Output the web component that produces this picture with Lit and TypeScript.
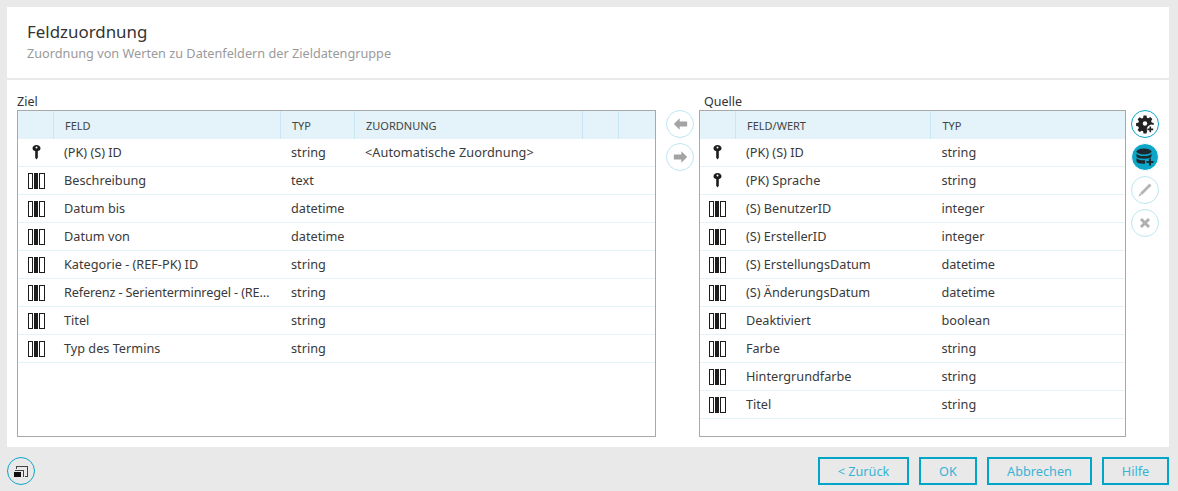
import { LitElement, html, css, svg } from "lit";
import { customElement } from "lit/decorators.js";

const keyIcon = svg`<svg class="ico" width="9" height="15" viewBox="0 0 9 15"><path fill="#1c1c1c" d="M4.500 0C6.700 0 8.500 1.300 8.500 3.200c0 1.300-.9 2.300-2.700 2.900v6.700L4.500 14.500l-1.300-1.700V6.100C1.400 5.500.5 4.500.5 3.200.5 1.300 2.300 0 4.500 0z"/><circle cx="4.500" cy="2.600" r="1" fill="#fff"/></svg>`;
const fieldIcon = svg`<svg class="ico" width="17" height="16" viewBox="0 0 17 16" shape-rendering="crispEdges"><g fill="#1c1c1c"><rect x="0" y="0" width="5" height="1"/><rect x="0" y="15" width="5" height="1"/><rect x="0" y="0" width="1" height="16"/><rect x="4" y="0" width="1" height="16"/><rect x="6" y="0" width="4" height="16"/><rect x="11" y="0" width="6" height="1"/><rect x="11" y="15" width="6" height="1"/><rect x="11" y="0" width="1" height="16"/><rect x="16" y="0" width="1" height="16"/></g></svg>`;

type Row = [string, string, string, string?];
const ziel: Row[] = [
  ["k", "(PK) (S) ID", "string", "<Automatische Zuordnung>"],
  ["f", "Beschreibung", "text"],
  ["f", "Datum bis", "datetime"],
  ["f", "Datum von", "datetime"],
  ["f", "Kategorie - (REF-PK) ID", "string"],
  ["f", "Referenz - Serienterminregel - (RE…", "string"],
  ["f", "Titel", "string"],
  ["f", "Typ des Termins", "string"],
];
const quelle: Row[] = [
  ["k", "(PK) (S) ID", "string"],
  ["k", "(PK) Sprache", "string"],
  ["f", "(S) BenutzerID", "integer"],
  ["f", "(S) ErstellerID", "integer"],
  ["f", "(S) ErstellungsDatum", "datetime"],
  ["f", "(S) ÄnderungsDatum", "datetime"],
  ["f", "Deaktiviert", "boolean"],
  ["f", "Farbe", "string"],
  ["f", "Hintergrundfarbe", "string"],
  ["f", "Titel", "string"],
];

@customElement("app-root")
export class AppRoot extends LitElement {
  static styles = css`
    :host { display: block; width: 1178px; height: 491px; background: #e9e9e9; font-family: "Noto Sans", sans-serif; font-size: 12.7px; color: #3a3a3a; overflow: hidden; }
    .page { padding: 7px 9px 0 7px; display: flex; flex-direction: column; height: 491px; box-sizing: border-box; }
    .panel { background: #fff; height: 440px; display: flex; flex-direction: column; box-sizing: border-box; }
    .head { height: 71px; padding: 14px 20px 0; box-sizing: border-box; }
    .title { font-size: 16.9px; line-height: 22px; color: #333; }
    .sub { font-size: 12.7px; line-height: 18px; margin-top: 1px; color: #9a9a9a; }
    .rule { height: 2px; background: #e9e9e9; }
    .body { display: flex; padding: 14px 10px 0; }
    .label { font-size: 12.5px; line-height: 16px; height: 16px; color: #333; }
    .right .label { padding-left: 5px; }
    .grid { border: 1px solid #a8a8a8; height: 327px; box-sizing: border-box; overflow: hidden; }
    .left .grid { width: 639px; }
    .right .grid { width: 427px; }
    .hrow { display: flex; height: 28px; background: #e3f3f9; font-size: 11px; color: #444; }
    .hrow > div { border-right: 1px solid #c7e8f3; box-sizing: border-box; line-height: 29px; padding-left: 11px; }
    .hrow > div:last-child { border-right: 0; }
    .row { display: flex; height: 28px; border-bottom: 1px solid #e3f3f9; box-sizing: border-box; line-height: 27px; }
    .row > div { box-sizing: border-box; padding-left: 10px; white-space: nowrap; overflow: hidden; }
    .row > .ic { padding-left: 0; display: flex; align-items: center; justify-content: center; }
    .row > .tight { letter-spacing: -0.15px; }
    .row > .wide { letter-spacing: 0.08px; }
    .ico { display: block; }
    .c0 { width: 36px; }
    .lc1 { width: 227px; } .lc2 { width: 74px; } .lc3 { width: 228px; } .lc4 { width: 36px; } .lc5 { width: 36px; }
    .rc1 { width: 196px; } .rc2 { width: 194px; }
    .mid { width: 43px; flex: none; padding: 16px 5px 0 0; display: flex; flex-direction: column; align-items: flex-end; gap: 5px; box-sizing: border-box; }
    .side { width: 38px; flex: none; padding: 16px 0 0 5px; box-sizing: border-box; display: flex; flex-direction: column; align-items: flex-start; gap: 5px; }
    .circ { width: 28px; height: 28px; border-radius: 50%; border: 1px solid #bde6f1; box-sizing: border-box; display: flex; align-items: center; justify-content: center; background: #fff; flex: none; }
    .circ.on { border-color: #0ca6c8; }
    .circ.fill { background: #0ca6c8; border-color: #fff; border-width: 1px; }
    .foot { display: flex; align-items: center; justify-content: space-between; padding-top: 10px; }
    .foot .circ { background: transparent; border-color: #0ca6c8; }
    .btns { display: flex; gap: 10px; }
    .btn { height: 28px; border: 2px solid #00a5c8; box-sizing: border-box; color: #37b3d6; font-size: 12.7px; line-height: 25px; text-align: center; }
    .b1 { width: 91px; } .b2 { width: 58px; } .b3 { width: 105px; } .b4 { width: 67px; }
  `;

  private rows(data: Row[], left: boolean) {
    return data.map(
      (r) => html`<div class="row">
        <div class="c0 ic">${r[0] === "k" ? keyIcon : fieldIcon}</div>
        <div class="${left ? "lc1" : "rc1"} ${r[1].startsWith("Referenz") ? "tight" : ""}">${r[1]}</div>
        <div class=${left ? "lc2" : "rc2"}>${r[2]}</div>
        ${left ? html`<div class="lc3 wide">${r[3] ?? ""}</div>` : ""}
      </div>`
    );
  }

  render() {
    return html`<div class="page">
      <div class="panel">
        <div class="head">
          <div class="title">Feldzuordnung</div>
          <div class="sub">Zuordnung von Werten zu Datenfeldern der Zieldatengruppe</div>
        </div>
        <div class="rule"></div>
        <div class="body">
          <div class="left">
            <div class="label">Ziel</div>
            <div class="grid">
              <div class="hrow">
                <div class="c0"></div><div class="lc1">FELD</div><div class="lc2">TYP</div><div class="lc3">ZUORDNUNG</div><div class="lc4"></div><div class="lc5"></div>
              </div>
              ${this.rows(ziel, true)}
            </div>
          </div>
          <div class="mid">
            <div class="circ"><svg width="15" height="12" viewBox="0 0 18 14"><path fill="#a3a3a3" d="M8 0 1 7l7 7V10h9V4H8z"/></svg></div>
            <div class="circ"><svg width="15" height="12" viewBox="0 0 18 14"><path fill="#a3a3a3" d="M10 0l7 7-7 7V10H1V4h9z"/></svg></div>
          </div>
          <div class="right">
            <div class="label">Quelle</div>
            <div class="grid">
              <div class="hrow">
                <div class="c0"></div><div class="rc1">FELD/WERT</div><div class="rc2">TYP</div>
              </div>
              ${this.rows(quelle, false)}
            </div>
          </div>
          <div class="side">
            <div class="circ on"><svg width="20" height="20" viewBox="0 0 20 20"><path fill="#222" d="M8.500 1.500h3l.4 2.200 1.500.6 1.900-1.300 2.100 2.100-1.300 1.900.6 1.500 2 .4v2.100a5 5 0 0 0-6.500 6.500l-.2 0-.5 2H8.500l-.4-2.200-1.500-.6-1.900 1.300-2.100-2.100 1.300-1.900-.6-1.500-2.200-.4v-3l2.200-.4.6-1.500-1.300-1.900 2.100-2.100 1.900 1.300 1.500-.6z"/><circle cx="10" cy="9.500" r="2.200" fill="#fff"/><path fill="#222" d="M14.500 12.500h1.600v2.100h2.100v1.600h-2.100v2.100h-1.600v-2.100h-2.100v-1.600h2.100z"/></svg></div>
            <div class="circ fill"><svg width="20" height="20" viewBox="0 0 20 20"><g fill="#1c2a30"><ellipse cx="9" cy="4.500" rx="7.500" ry="3"/><path d="M1.500 6.500c1 2 4 2.600 7.500 2.600s6.500-.6 7.500-2.600v3c-.6 1.300-3 2.300-7.500 2.300s-6.900-1-7.500-2.300z"/><path d="M1.500 11c1 1.700 4 2.300 7.500 2.300h1v3.500h-1c-4.500 0-6.900-1-7.500-2.300z"/><path d="M14 11.500h2v2.500h2.500v2H16v2.500h-2V16h-2.500v-2H14z"/></g></svg></div>
            <div class="circ"><svg width="16" height="16" viewBox="0 0 16 16"><path fill="#b5b5b5" d="M12.500 1.500 14.500 3.500 5 13l-3.500 1.500L3 11z"/><path stroke="#fff" stroke-width=".7" d="M3.200 11l1.900 1.900"/></svg></div>
            <div class="circ"><svg width="12" height="12" viewBox="0 0 12 12"><path stroke="#b0b0b0" stroke-width="3" d="M2 2l8 8M10 2l-8 8"/></svg></div>
          </div>
        </div>
      </div>
      <div class="foot">
        <div class="circ"><svg width="14" height="11" viewBox="0 0 14 11" shape-rendering="crispEdges"><g fill="none" stroke="#444"><path d="M2.500 2.500v-2h11v10h-3"/><path d="M.5 4.500h9v6"/></g><rect x="0" y="6" width="7" height="5" fill="#111"/></svg></div>
        <div class="btns">
          <div class="btn b1">&lt; Zurück</div>
          <div class="btn b2">OK</div>
          <div class="btn b3">Abbrechen</div>
          <div class="btn b4">Hilfe</div>
        </div>
      </div>
    </div>`;
  }
}
